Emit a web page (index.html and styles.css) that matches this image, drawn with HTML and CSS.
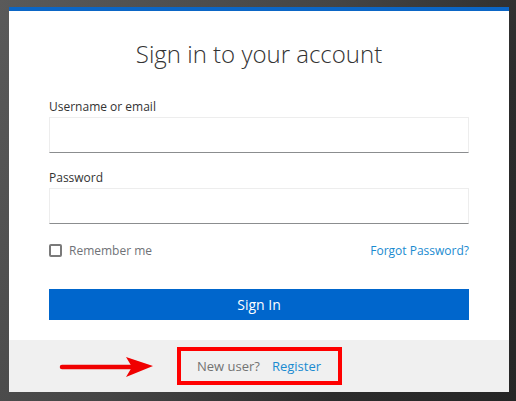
FILE: index.html
```html
<!DOCTYPE html>
<html lang="en">
<head>
    <meta charset="UTF-8">
    <meta name="viewport" content="width=device-width, initial-scale=1.0">
    <title>Sign in to your account</title>
    <link rel="stylesheet" href="styles.css">
</head>
<body class="page">
    <div class="login-card">
        <div class="card-body">
            <h1 id="heading">Sign in to your account</h1>
            <form class="login-form" id="kc-form-login">
                <div class="field">
                    <label for="username" class="field-label">Username or email</label>
                    <input id="username" class="input-field" type="text" autocomplete="off">
                </div>
                <div class="field">
                    <label for="password" class="field-label">Password</label>
                    <input id="password" class="input-field" type="password" autocomplete="off">
                </div>
                <div class="options-row">
                    <label class="remember">
                        <span class="checkbox"></span>
                        Remember me
                    </label>
                    <a href="#" class="link">Forgot Password?</a>
                </div>
                <button type="button" class="sign-in-btn">Sign In</button>
            </form>
        </div>
        <div class="card-footer">
            <svg class="arrow" width="96" height="24" viewBox="0 0 96 24">
                <line x1="3" y1="12" x2="74" y2="12" stroke="#f00000" stroke-width="4.5" stroke-linecap="round"/>
                <path d="M67 2 L94 11 L67 22 L73 12 Z" fill="#f00000"/>
            </svg>
            <div class="register-box">
                <span class="muted">New user?</span>
                <a href="#" class="link">Register</a>
            </div>
        </div>
    </div>
</body>
</html>
```

FILE: styles.css
```css
body, html {
    margin: 0;
    height: 100%;
    font-family: "Open Sans", "Liberation Sans", sans-serif;
}
.page {
    background: linear-gradient(120deg, #5a5a5a 0%, #454545 45%, #2c2c2c 75%, #262626 100%);
    padding: 7px 0 0 9px;
    box-sizing: border-box;
}
.login-card {
    width: 500px;
    background-color: #ffffff;
    border-top: 4px solid #0b66c6;
    position: relative;
}
.card-body {
    padding: 27px 40px 20px 40px;
}
#heading {
    margin: 0;
    text-align: center;
    font-weight: 300;
    font-size: 24px;
    line-height: 32px;
    color: #333333;
}
.login-form {
    display: flex;
    flex-direction: column;
    margin-top: 27px;
}
.field {
    display: flex;
    flex-direction: column;
    margin-bottom: 15px;
}
.field-label {
    font-size: 12px;
    line-height: 20px;
    color: #333333;
}
.input-field {
    height: 36px;
    box-sizing: border-box;
    border: 1px solid #ededed;
    border-bottom-color: #8b8d8f;
    outline: none;
    font-size: 14px;
    padding: 0 8px;
}
.options-row {
    display: flex;
    justify-content: space-between;
    align-items: center;
    height: 20px;
    margin-top: 1px;
    font-size: 12px;
}
.remember {
    display: flex;
    align-items: center;
    gap: 7px;
    color: #6f7277;
}
.checkbox {
    width: 13px;
    height: 13px;
    box-sizing: border-box;
    border: 2px solid #7a7a7a;
    border-radius: 2px;
}
.link {
    color: #1a8bd0;
    text-decoration: none;
}
.sign-in-btn {
    margin-top: 29px;
    height: 31px;
    border: none;
    background-color: #0066cc;
    color: #ffffff;
    font-family: inherit;
    font-size: 14px;
}
.card-footer {
    height: 52px;
    background-color: #f0f0f0;
    display: flex;
    justify-content: center;
    align-items: center;
    position: relative;
}
.register-box {
    border: 4px solid #ff0000;
    height: 38px;
    box-sizing: border-box;
    display: flex;
    align-items: center;
    gap: 12px;
    padding: 0 16px;
    font-size: 13px;
    width: 165px;
    justify-content: center;
}
.muted {
    color: #737373;
}
.arrow {
    position: absolute;
    left: 50px;
    top: 15px;
}
```
